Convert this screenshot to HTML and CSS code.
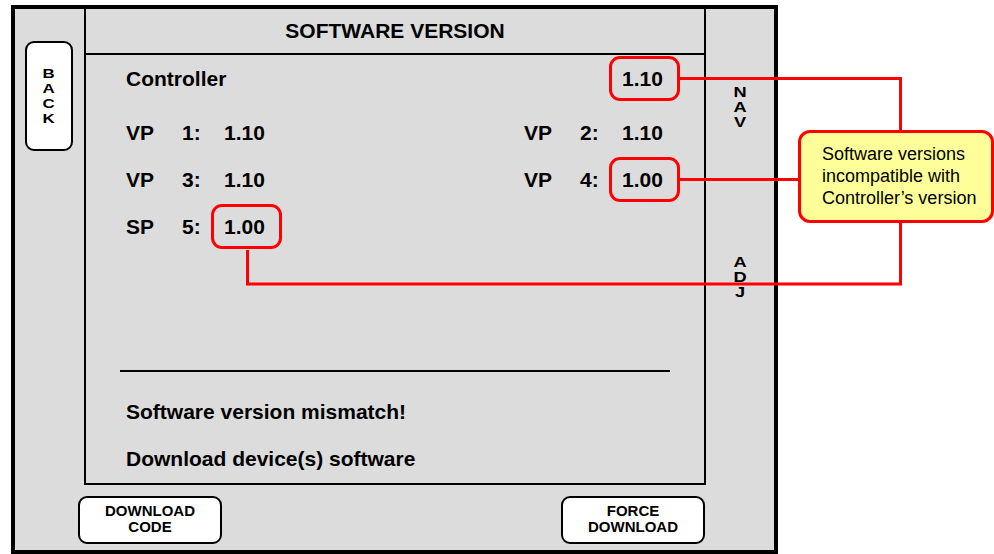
FILE: index.html
```html
<!DOCTYPE html>
<html>
<head>
<meta name="viewport" content="width=device-width, initial-scale=1">
<link rel="stylesheet" href="styles.css">
</head>
<body>

<div class="device">
  <div class="screen">
    <div class="side side-left">
      <div class="backBtn"><span class="wide">B<br>A<br>C<br>K</span></div>
    </div>

    <div class="panel">
      <div class="title">SOFTWARE VERSION</div>
      <div class="rows">
        <div class="row row-ctrl">
          <span class="name">Controller</span>
          <span class="val val-r flag">1.10</span>
        </div>
        <div class="row row-a">
          <span>VP</span><span>1:</span><span class="val">1.10</span>
          <span>VP</span><span>2:</span><span class="val">1.10</span>
        </div>
        <div class="row row-b">
          <span>VP</span><span>3:</span><span class="val">1.10</span>
          <span>VP</span><span>4:</span><span class="val flag">1.00</span>
        </div>
        <div class="row row-b">
          <span>SP</span><span>5:</span><span class="val flag">1.00</span>
        </div>
        <div class="rule"></div>
        <div class="msg msg-first">Software version mismatch!</div>
        <div class="msg">Download device(s) software</div>
      </div>
    </div>

    <div class="side side-right">
      <div class="tag tag-nav"><span class="wide">N<br>A<br>V</span></div>
      <div class="tag tag-adj"><span class="wide">A<br>D<br>J</span></div>
    </div>
  </div>

  <div class="buttons">
    <div class="softBtn">DOWNLOAD<br>CODE</div>
    <div class="softBtn">FORCE<br>DOWNLOAD</div>
  </div>
</div>

<div class="callout">
  Software versions<br>
  incompatible with<br>
  Controller&rsquo;s version
</div>

<!-- red pointer lines from the flagged values to the note -->
<svg class="wires" width="994" height="554" viewBox="0 0 994 554">
  <path d="M679 78.5 H900.5 V131" />
  <path d="M680 179.5 H798" />
  <path d="M247.5 250 V284 H900.5 V222" />
</svg>

</body>
</html>
```

FILE: styles.css
```css
* {
  box-sizing: border-box;
}

body {
  margin: 0;
  position: relative;
  display: flex;
  align-items: flex-start;
  background: #fff;
  color: #000;
  font-family: "Liberation Sans", Arial, sans-serif;
  overflow: hidden;
}

/* The touch screen frame */
.device {
  margin: 5px 0 0 11px;
  width: 767px;
  height: 549px;
  border: 4px solid #000;
  background: #dcdcdc;
}

.screen {
  display: flex;
  height: 476px;
}

.side-left {
  width: 69px;
  padding: 32px 0 0 10px;
}

.backBtn {
  width: 48px;
  height: 110px;
  border: 2px solid #000;
  border-radius: 9px;
  background: #fff;
  display: flex;
  align-items: center;
  justify-content: center;
  text-align: center;
  font-size: 13px;
  font-weight: bold;
  line-height: 15px;
}

/* the side key letters are drawn a bit wider than the font */
.wide {
  display: inline-block;
  transform: scaleX(1.3);
}

.side-right {
  flex: 1;
  text-align: center;
  font-size: 14px;
  font-weight: bold;
  line-height: 15px;
}
.tag-nav {
  margin-top: 76px;
}
.tag-adj {
  margin-top: 125px;
}

/* Middle panel */
.panel {
  width: 622px;
  border-left: 2px solid #000;
  border-right: 2px solid #000;
  border-bottom: 2px solid #000;
}

.title {
  height: 46px;
  padding-top: 10px;
  border-bottom: 2px solid #000;
  text-align: center;
  font-size: 21px;
  font-weight: bold;
  line-height: 24px;
}

.rows {
  padding-left: 40px;
  font-size: 21px;
  font-weight: bold;
  line-height: 24px;
}

.row {
  display: grid;
  grid-template-columns: 56px 42px 300px 56px 42px auto;
}
.row-ctrl {
  margin-top: 12px;
}
.row-ctrl .name {
  grid-column: 1 / 4;
}
.row-ctrl .val-r {
  grid-column: 6;
}
.row-a {
  margin-top: 30px;
}
.row-b {
  margin-top: 23px;
}

.val {
  justify-self: start;
}

/* Red ring round a version that does not match */
.flag {
  position: relative;
}
.flag:after {
  content: "";
  position: absolute;
  top: -11px;
  bottom: -10px;
  left: -13px;
  right: -17px;
  border: 3px solid #f00;
  border-radius: 11px;
}

.rule {
  margin: 131px 0 0 -6px;
  width: 550px;
  border-top: 2px solid #000;
}

.msg {
  margin-top: 23px;
}
.msg-first {
  margin-top: 28px;
}

/* Soft keys under the panel */
.buttons {
  display: flex;
  justify-content: space-between;
  padding: 11px 69px 0 63px;
}

.softBtn {
  width: 144px;
  height: 48px;
  padding-bottom: 3px;
  border: 2px solid #000;
  border-radius: 9px;
  background: #fff;
  display: flex;
  align-items: center;
  justify-content: center;
  text-align: center;
  font-size: 15px;
  font-weight: bold;
  line-height: 16px;
}

/* Yellow note */
.callout {
  margin: 130px 0 0 20px;
  width: 196px;
  padding: 10px 8px 11px 21px;
  border: 3px solid #f00;
  border-radius: 12px;
  background: #ffff99;
  font-size: 18px;
  line-height: 22px;
  white-space: nowrap;
}

.wires {
  position: absolute;
  top: 0;
  left: 0;
  pointer-events: none;
}
.wires path {
  fill: none;
  stroke: #f00;
  stroke-width: 3;
}
```
